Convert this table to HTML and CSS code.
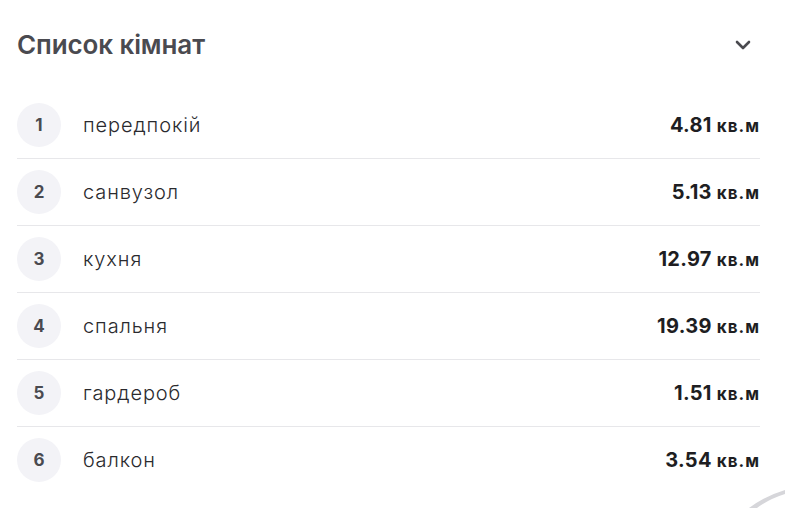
FILE: index.html
```html
<!DOCTYPE html>
<html lang="uk">
<head>
<meta charset="utf-8">
<link rel="stylesheet" href="styles.css">
</head>
<body>
<div class="panel">
  <div class="header">
    <h2 class="title">Список кімнат</h2>
    <svg class="chevron" width="16" height="10" viewBox="0 0 16 10"><path d="M2 2 L8 8 L14 2" fill="none" stroke="#4a4a4f" stroke-width="2.6" stroke-linecap="round" stroke-linejoin="round"/></svg>
  </div>
  <ul class="rooms">
    <li class="room"><span class="num">1</span><span class="name">передпокій</span><span class="area">4.81 <small>кв.м</small></span></li>
    <li class="room"><span class="num">2</span><span class="name">санвузол</span><span class="area">5.13 <small>кв.м</small></span></li>
    <li class="room"><span class="num">3</span><span class="name">кухня</span><span class="area">12.97 <small>кв.м</small></span></li>
    <li class="room"><span class="num">4</span><span class="name">спальня</span><span class="area">19.39 <small>кв.м</small></span></li>
    <li class="room"><span class="num">5</span><span class="name">гардероб</span><span class="area">1.51 <small>кв.м</small></span></li>
    <li class="room last"><span class="num">6</span><span class="name">балкон</span><span class="area">3.54 <small>кв.м</small></span></li>
  </ul>
  <svg class="swoosh" width="40" height="22" viewBox="0 0 40 22"><path d="M4 22 Q20 10 40 4 L40 8 Q24 13 12 22 Z" fill="#d6d6da"/></svg>
</div>
</body>
</html>
```
FILE: styles.css
```css
html, body {
  margin: 0;
  padding: 0;
  background: #fff;
}
body {
  font-family: Inter, "Noto Sans", sans-serif;
  color: #222;
  overflow: hidden;
}
.panel {
  position: relative;
  height: 508px;
  padding: 0 25px 0 17px;
}
.header {
  height: 92px;
  display: flex;
  align-items: center;
  justify-content: space-between;
}
.title {
  margin: 0;
  margin-top: -3px;
  font-size: 26px;
  font-weight: 600;
  color: #4a4a50;
  letter-spacing: -0.1px;
}
.chevron {
  margin-right: 9px;
  margin-top: -2px;
}
.rooms {
  list-style: none;
  margin: 0;
  padding: 0;
}
.room {
  height: 66px;
  display: flex;
  align-items: center;
  border-bottom: 1px solid #e7e7ea;
}
.room.last {
  border-bottom: none;
}
.num {
  width: 44px;
  height: 44px;
  border-radius: 50%;
  background: #f3f3f7;
  display: flex;
  align-items: center;
  justify-content: center;
  font-size: 17px;
  font-weight: 700;
  color: #4a4a50;
}
.name {
  margin-left: 22px;
  font-size: 20px;
  font-weight: 300;
  color: #2a2a2e;
  letter-spacing: 0.9px;
  flex: 1;
}
.area {
  font-size: 20px;
  font-weight: 700;
  color: #1e1e22;
  letter-spacing: 0.3px;
}
.area small {
  font-size: 17px;
  font-weight: 700;
  letter-spacing: 1px;
}
.swoosh {
  position: absolute;
  right: 0;
  bottom: 0;
}
```
